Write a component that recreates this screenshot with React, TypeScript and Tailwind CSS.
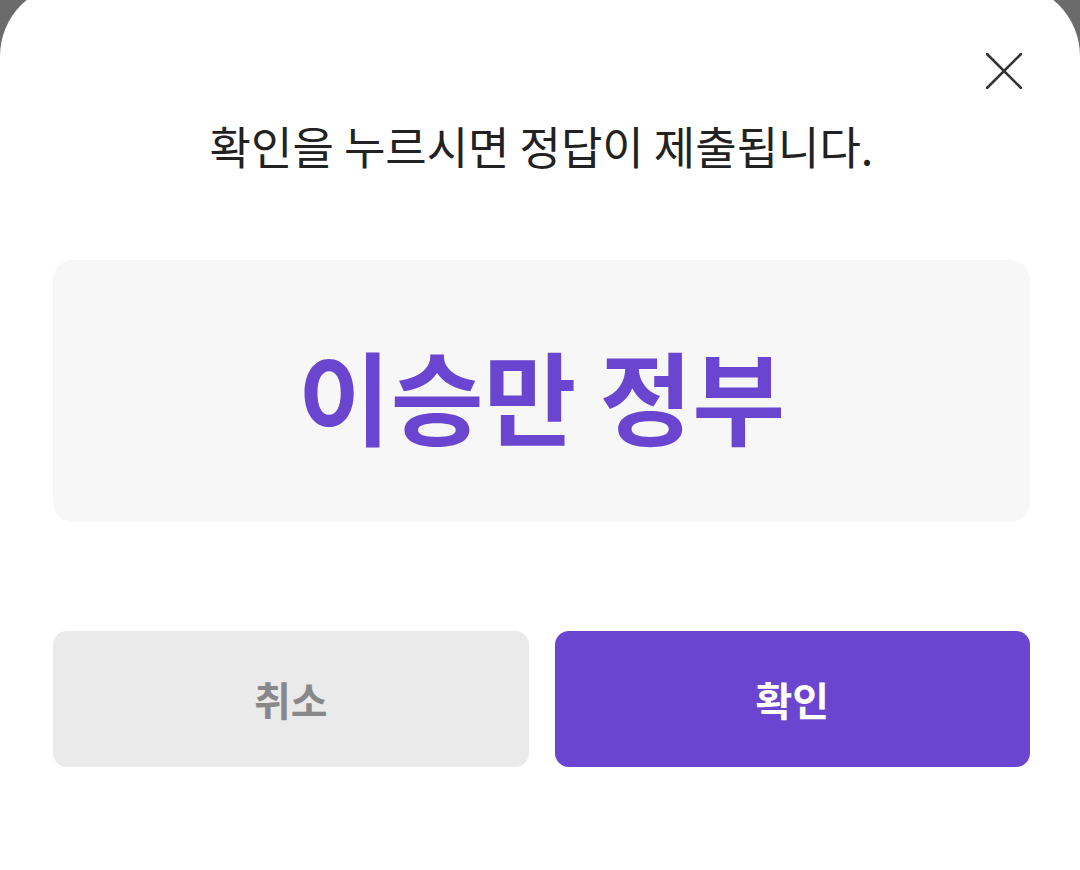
const font = { fontFamily: '"Noto Sans CJK KR", "Noto Sans", sans-serif' };

const CloseIcon = () => (
  <svg width="36" height="36" viewBox="0 0 36 36" fill="none">
    <path d="M1 1L35 35M35 1L1 35" stroke="#333333" strokeWidth="2.6" strokeLinecap="round" />
  </svg>
);

export default function App() {
  return (
    <div className="w-[1080px] h-[870px] overflow-hidden bg-[#6b6b6b]" style={font}>
      <div className="relative mt-[-16px] h-[886px] rounded-t-[72px] bg-white pl-[53px] pr-[50px] pt-[139px]">
        <button className="absolute right-[58px] top-[69px]">
          <CloseIcon />
        </button>

        <p className="text-center text-[45px] leading-[45px] text-[#222222]">
          확인을 누르시면 정답이 제출됩니다.
        </p>

        <div className="mt-[92px] flex h-[262px] items-center justify-center rounded-[20px] bg-[#f7f7f7]">
          <span className="pt-[6px] text-[101px] font-bold leading-none text-[#6a46d0]">이승만 정부</span>
        </div>

        <div className="mt-[109px] grid grid-cols-2 gap-[26px]">
          <button className="flex h-[136px] items-center justify-center rounded-[14px] bg-[#eaeaea] text-[40px] font-bold text-[#888888]">
            취소
          </button>
          <button className="flex h-[136px] items-center justify-center rounded-[14px] bg-[#6a46d0] text-[40px] font-bold text-white">
            확인
          </button>
        </div>
      </div>
    </div>
  );
}
